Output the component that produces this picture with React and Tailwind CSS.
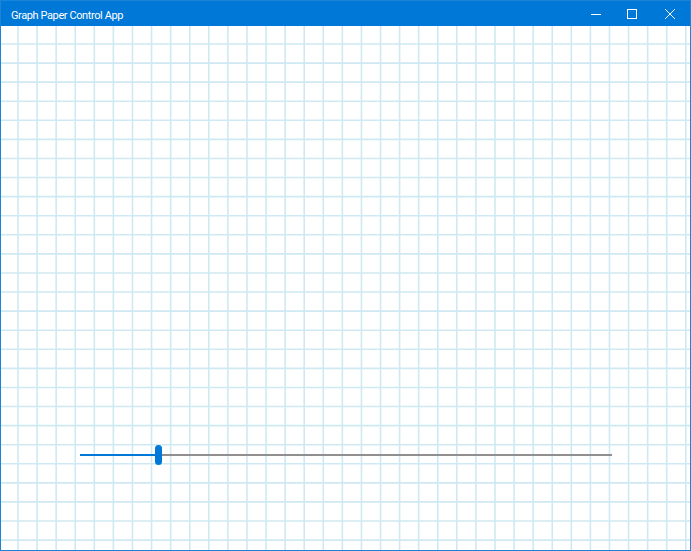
import React from 'react';

const STEP = 19.08;
const COLS = Array.from({ length: 37 }, (_, i) => 17 + i * STEP);
const ROWS = Array.from({ length: 27 }, (_, i) => 18 + i * STEP);

function GraphPaper() {
  return (
    <svg className="absolute inset-0 w-full h-full" xmlns="http://www.w3.org/2000/svg">
      {COLS.map((x, i) => (
        <line key={'v' + i} x1={x} y1={0} x2={x} y2={600} stroke="#cfe9f2" strokeWidth={1.6} />
      ))}
      {ROWS.map((y, i) => (
        <line key={'h' + i} x1={0} y1={y} x2={700} y2={y} stroke="#cfe9f2" strokeWidth={1.6} />
      ))}
    </svg>
  );
}

export default function App() {
  return (
    <div className="w-[691px] h-[551px] flex flex-col border border-[#1a84d8] bg-white overflow-hidden" style={{ fontFamily: 'Roboto, "Noto Sans", sans-serif' }}>
      <div className="h-[25px] shrink-0 bg-[#0078d7] flex items-center justify-between text-white">
        <span className="pl-[10px] pt-[3px] text-[11px] tracking-[-0.4px] leading-none">Graph Paper Control App</span>
        <div className="flex h-full">
          <div className="w-[36px] flex items-center justify-center">
            <svg width="10" height="10" viewBox="0 0 10 10"><line x1="0" y1="5.5" x2="10" y2="5.5" stroke="white" strokeWidth="1" /></svg>
          </div>
          <div className="w-[36px] flex items-center justify-center">
            <svg width="10" height="10" viewBox="0 0 10 10"><rect x="0.5" y="0.5" width="9" height="9" fill="none" stroke="white" strokeWidth="1" /></svg>
          </div>
          <div className="w-[40px] flex items-center justify-center">
            <svg width="10" height="10" viewBox="0 0 10 10"><path d="M0 0 L10 10 M10 0 L0 10" stroke="white" strokeWidth="1" /></svg>
          </div>
        </div>
      </div>
      <div className="relative flex-1">
        <GraphPaper />
        <div className="relative pt-[419px] pl-[79px] w-[611px]">
          <div className="relative h-[20px] flex items-center">
            <div className="h-[2px] w-[78px] bg-[#0078d7]" />
            <div className="h-[2px] flex-1 bg-[#8f8f8f]" />
            <div className="absolute left-[75px] top-0 w-[7px] h-[20px] rounded-full bg-[#0078d7]" />
          </div>
        </div>
      </div>
    </div>
  );
}
